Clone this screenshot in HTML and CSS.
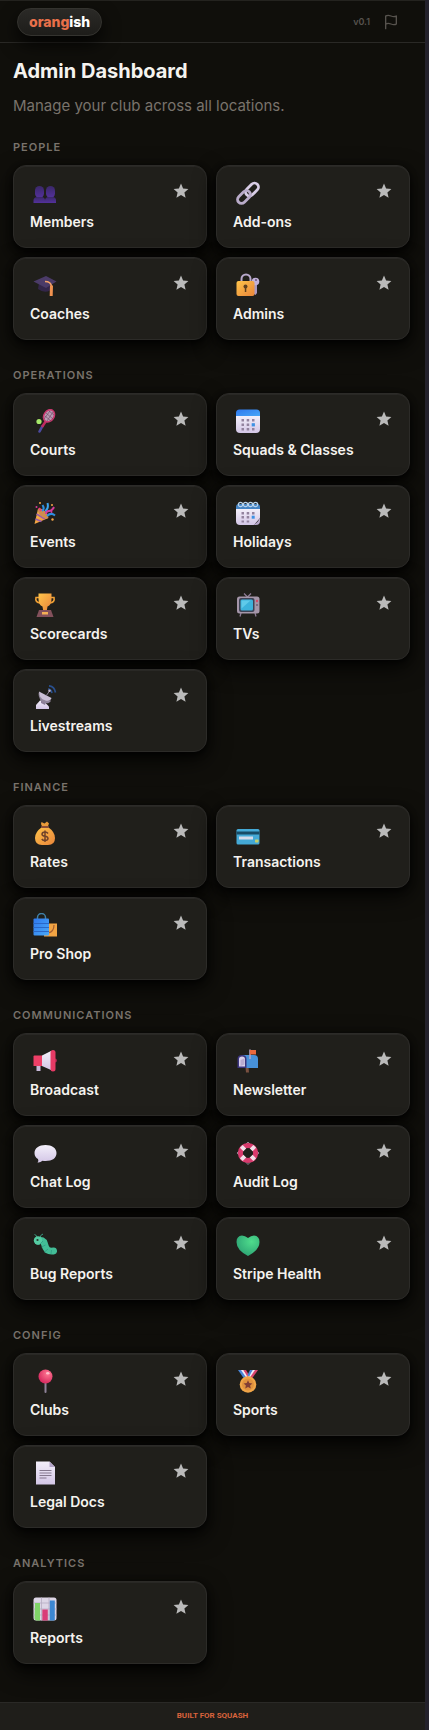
FILE: index.html
```html
<!DOCTYPE html>
<html lang="en">

<head>
  <meta charset="UTF-8" />
  <meta name="viewport" content="width=device-width, initial-scale=1.0" />
  <title>Admin Dashboard</title>
  <link rel="stylesheet" href="styles.css">
</head>

<body>
  <!-- shared shapes and gradients -->
  <svg class="defs" width="0" height="0" aria-hidden="true">
    <defs>
      <symbol id="star" viewBox="0 0 16 16">
        <path d="M8 .6l2.1 4.9 5.3.5-4 3.5 1.2 5.3L8 12l-4.6 2.8 1.2-5.3-4-3.5 5.3-.5z" />
      </symbol>
      <linearGradient id="gold" x1="0" y1="0" x2="1" y2="1">
        <stop offset="0" stop-color="#ffc44a" />
        <stop offset="1" stop-color="#e9853a" />
      </linearGradient>
      <linearGradient id="paper" x1="0" y1="0" x2="0" y2="1">
        <stop offset="0" stop-color="#f3effa" />
        <stop offset="1" stop-color="#d3c6e6" />
      </linearGradient>
      <linearGradient id="blue" x1="0" y1="0" x2="1" y2="1">
        <stop offset="0" stop-color="#2f78ee" />
        <stop offset="1" stop-color="#49a9f8" />
      </linearGradient>
      <linearGradient id="purple" x1="0" y1="0" x2="0" y2="1">
        <stop offset="0" stop-color="#3a2868" />
        <stop offset="1" stop-color="#54319c" />
      </linearGradient>
      <radialGradient id="green" cx=".65" cy=".3" r=".8">
        <stop offset="0" stop-color="#4fdc8c" />
        <stop offset="1" stop-color="#2a9f72" />
      </radialGradient>
      <radialGradient id="pink" cx=".65" cy=".3" r=".7">
        <stop offset="0" stop-color="#ff7892" />
        <stop offset="1" stop-color="#d82b60" />
      </radialGradient>
    </defs>
  </svg>

  <header class="topbar">
    <a href="#" class="logo"><span>orang</span>ish</a>
    <div class="topbar-right">
      <span class="version">v0.1</span>
      <button class="flag-btn" aria-label="Report a problem">
        <svg width="16" height="16" viewBox="0 0 24 24" fill="none" stroke="currentColor" stroke-width="2" stroke-linecap="round" stroke-linejoin="round">
          <path d="M4 15s1-1 4-1 5 2 8 2 4-1 4-1V3s-1 1-4 1-5-2-8-2-4 1-4 1z" />
          <path d="M4 22V15" />
        </svg>
      </button>
    </div>
  </header>

  <main>
    <h1>Admin Dashboard</h1>
    <p class="subtitle">Manage your club across all locations.</p>

    <section>
      <h2>People</h2>
      <div class="grid">
        <div class="card">
          <div class="card-top">
            <svg class="icon" viewBox="0 0 24 24">
              <g fill="url(#purple)">
                <rect x="2" y="5" width="9" height="12" rx="4.5" />
                <rect x="13" y="5" width="9" height="12" rx="4.5" />
                <path d="M.5 22v-2.5q0-3.5 4-3.5h4q3.500 0 3.500 3.500V22z" />
                <path d="M12 22v-2.5q0-3.500 3.500-3.500h4q3.500 0 3.500 3.500V22z" />
              </g>
            </svg>
            <button class="fav" aria-label="Favourite Members"><svg><use href="#star" /></svg></button>
          </div>
          <a href="#">Members</a>
        </div>
        <div class="card">
          <div class="card-top">
            <svg class="icon" viewBox="0 0 24 24">
              <g fill="none" stroke-width="2.8">
                <rect x="8.5" y="4.5" width="15" height="8" rx="4" transform="rotate(-45 16 8.5)" stroke="#d8cde6" />
                <rect x=".5" y="12" width="15" height="8" rx="4" transform="rotate(-45 8 16)" stroke="#b9abc9" />
              </g>
            </svg>
            <button class="fav" aria-label="Favourite Add-ons"><svg><use href="#star" /></svg></button>
          </div>
          <a href="#">Add-ons</a>
        </div>
        <div class="card">
          <div class="card-top">
            <svg class="icon" viewBox="0 0 24 24">
              <path d="M6 10l-1 6q6 4.5 12 1.5l2-7z" fill="#33264a" />
              <path d="M.5 8.500L13 3l10.500 5.500L13 15z" fill="#4b3b68" />
              <path d="M12 8.500q6 0 6.500 5" fill="none" stroke="#f3a269" stroke-width="1.6" />
              <path d="M17 12.500h3l-.3 10.500h-3z" fill="#f09250" />
            </svg>
            <button class="fav" aria-label="Favourite Coaches"><svg><use href="#star" /></svg></button>
          </div>
          <a href="#">Coaches</a>
        </div>
        <div class="card">
          <div class="card-top">
            <svg class="icon" viewBox="0 0 24 24">
              <path d="M5.500 10V6a4.500 4.500 0 0 1 9 0v4" fill="none" stroke="#b8a8cb" stroke-width="2" />
              <path d="M18 12h3v8l-1.500 2-1.500-1z" fill="#aa98c2" />
              <circle cx="19.5" cy="8.5" r="3.8" fill="#c2b1d9" />
              <circle cx="20" cy="7" r=".9" fill="#5b4a72" />
              <rect x=".5" y="8" width="18" height="15" rx="2" fill="url(#gold)" />
              <circle cx="9.5" cy="13.5" r="2" fill="#60401f" />
              <path d="M8.800 14h1.500v5H8.800z" fill="#60401f" />
            </svg>
            <button class="fav" aria-label="Favourite Admins"><svg><use href="#star" /></svg></button>
          </div>
          <a href="#">Admins</a>
        </div>
      </div>
    </section>

    <section>
      <h2>Operations</h2>
      <div class="grid">
        <div class="card">
          <div class="card-top">
            <svg class="icon" viewBox="0 0 24 24">
              <path d="M6.500 22.500l3-5.500" stroke="#4c4aa0" stroke-width="2.6" stroke-linecap="round" />
              <path d="M9 18l4-6" stroke="#c02a61" stroke-width="2.4" />
              <ellipse cx="16" cy="6.8" rx="5" ry="6.5" transform="rotate(33 16 6.8)" fill="#b99bb4" stroke="#c9386e" stroke-width="1.6" />
              <path d="M12 7l6 5M13 4l7 6M16 2l5 4M11 10l6-8M14 12l6-9" stroke="#6c4560" stroke-width=".6" />
              <circle cx="6" cy="12.5" r="2.6" fill="#a6e86a" />
            </svg>
            <button class="fav" aria-label="Favourite Courts"><svg><use href="#star" /></svg></button>
          </div>
          <a href="#">Courts</a>
        </div>
        <div class="card">
          <div class="card-top">
            <svg class="icon" viewBox="0 0 24 24">
              <path d="M3.500.5h17q3.500 0 3.500 3.500v4H0V4Q0 .5 3.500.5z" fill="url(#blue)" />
              <path d="M0 7h24v13q0 4-4 4H4q-4 0-4-4z" fill="url(#paper)" />
              <path d="M5.500 10H8v2.500H5.500zM10.700 10h2.500v2.500h-2.500zM16 10h2.500v2.500H16zM5.500 14.500H8V17H5.500zM10.700 14.500h2.500V17h-2.500zM5.500 19H8v2.500H5.500zM10.700 19h2.500v2.500h-2.500zM16 19h2.500v2.500H16z" fill="#93839f" />
              <path d="M15.700 14.200h3.200v3.200h-3.200z" fill="#3d91e4" />
            </svg>
            <button class="fav" aria-label="Favourite Squads &amp; Classes"><svg><use href="#star" /></svg></button>
          </div>
          <a href="#">Squads &amp; Classes</a>
        </div>
        <div class="card">
          <div class="card-top">
            <svg class="icon" viewBox="0 0 24 24">
              <path d="M1.500 23L5 8q4 1 7 4t3.500 5z" fill="url(#gold)" />
              <path d="M2.500 18l6 2.500M3.500 13l8.500 5" stroke="#9a5ea8" stroke-width="1.8" />
              <ellipse cx="10" cy="12.5" rx="3" ry="6.5" transform="rotate(-47 10 12.5)" fill="#cf8d4e" />
              <path d="M9 10q3-2 .5-6M14 15q4-4 8-.5" stroke="#2f8fe0" stroke-width="2" fill="none" />
              <path d="M12 10q4-2 2.500-8" stroke="#3ba5ee" stroke-width="2" fill="none" />
              <path d="M13 13q0-3 3-3t5-4" stroke="#d33b9c" stroke-width="2" fill="none" />
              <path d="M6 7l2 3" stroke="#ef3f78" stroke-width="2" />
              <g fill="#f3a74a"><circle cx="7" cy="2" r="1" /><circle cx="19" cy="4" r="1" /><circle cx="19.5" cy="18.5" r="1.2" /></g>
              <g fill="#d33b9c"><circle cx="3.5" cy="6" r="1" /><circle cx="18.5" cy="11" r="1" /></g>
            </svg>
            <button class="fav" aria-label="Favourite Events"><svg><use href="#star" /></svg></button>
          </div>
          <a href="#">Events</a>
        </div>
        <div class="card">
          <div class="card-top">
            <svg class="icon" viewBox="0 0 24 24">
              <path d="M3 3h18q3 0 3 3v3H0V6q0-3 3-3z" fill="#4484c4" />
              <path d="M0 8h24v9l-6 7H4q-4 0-4-4z" fill="url(#paper)" />
              <path d="M24 16v4q0 4-4 4h-3q6-3 7-8z" fill="#b9a9cc" />
              <g fill="none" stroke="#b8d3ec" stroke-width="1.2">
                <circle cx="4.5" cy="3.5" r="2.2" /><circle cx="9.5" cy="3.5" r="2.2" /><circle cx="14.5" cy="3.5" r="2.2" /><circle cx="19.5" cy="3.5" r="2.2" />
              </g>
              <path d="M5.500 11H8v2.500H5.500zM10.700 11h2.500v2.500h-2.500zM16 11h2.500v2.500H16zM5.500 15H8v2.500H5.500zM10.700 15h2.500v2.500h-2.500zM5.500 19.500H8v2H5.500zM10.700 19.500h2.500v2h-2.500z" fill="#93839f" />
              <path d="M15.700 14.700h3v3h-3z" fill="#3d91e4" />
            </svg>
            <button class="fav" aria-label="Favourite Holidays"><svg><use href="#star" /></svg></button>
          </div>
          <a href="#">Holidays</a>
        </div>
        <div class="card">
          <div class="card-top">
            <svg class="icon" viewBox="0 0 24 24">
              <path d="M6 4.500H3q-1.200 5 4.500 5.500M18 4.500h3q1.200 5-4.500 5.500" fill="none" stroke="#f0a034" stroke-width="1.6" />
              <path d="M5.500.5h13V6q0 6-4 7.500l-.7 4h-3.600l-.7-4q-4-1.500-4-7.500z" fill="url(#gold)" />
              <path d="M6 17h12l2.500 7h-17z" fill="#83505b" />
              <path d="M9 19h6v2.500H9z" fill="#f4b055" />
            </svg>
            <button class="fav" aria-label="Favourite Scorecards"><svg><use href="#star" /></svg></button>
          </div>
          <a href="#">Scorecards</a>
        </div>
        <div class="card">
          <div class="card-top">
            <svg class="icon" viewBox="0 0 24 24">
              <path d="M8 .5L11.500 4 15 .5M5 20l-1 3.500M19 20l1 3.500" stroke="#8c7a94" stroke-width="1.3" fill="none" />
              <rect x="1" y="3.500" width="22.500" height="17" rx="2.500" fill="#a596a9" />
              <rect x="3" y="5" width="15.500" height="14" rx="2" fill="#3e4254" />
              <rect x="4.500" y="6.500" width="12.500" height="11" rx="1.500" fill="#3cb2db" />
              <path d="M5.500 8.500q0-1 1-1h8l-9 8z" fill="#5fcaea" />
              <circle cx="21" cy="8" r="1.200" fill="#d24b69" />
              <circle cx="21" cy="12" r="1.100" fill="#6e6378" />
            </svg>
            <button class="fav" aria-label="Favourite TVs"><svg><use href="#star" /></svg></button>
          </div>
          <a href="#">TVs</a>
        </div>
        <div class="card">
          <div class="card-top">
            <svg class="icon" viewBox="0 0 24 24">
              <path d="M3 24v-4l4-4.500h3l6 6V24z" fill="url(#paper)" />
              <path d="M8 13l5 4-1 3-4-2z" fill="#8a7d97" />
              <path d="M5.500 7q1 8 12.500 8.500-1 3-5 2.800Q5 16.500 5.500 7z" fill="#8f8499" />
              <path d="M6 6.500L18.500 13q-1 3.500-6 2.500-7-2-6.500-9z" fill="#cbc0d6" />
              <path d="M13 11l3.500-5" stroke="#8f8499" stroke-width="1" />
              <path d="M15 4q3 0 4 4M16 .8q5.500.7 6.500 6.700" fill="none" stroke="#294f8e" stroke-width="1.7" />
              <circle cx="16.5" cy="5.8" r="1.2" fill="#c5bad0" />
            </svg>
            <button class="fav" aria-label="Favourite Livestreams"><svg><use href="#star" /></svg></button>
          </div>
          <a href="#">Livestreams</a>
        </div>
      </div>
    </section>

    <section>
      <h2>Finance</h2>
      <div class="grid">
        <div class="card">
          <div class="card-top">
            <svg class="icon" viewBox="0 0 24 24">
              <path d="M8.500 1l3 1.500L14 .5l2 2-1.500 4h-5L8 3z" fill="#e99a39" />
              <path d="M9 6h6q7 5 7 11 0 7-7 7H9q-7 0-7-7Q2 11 9 6z" fill="url(#gold)" />
              <rect x="8" y="5" width="8" height="2" rx="1" fill="#8c4d36" />
              <path d="M15 12.500q-1-1.500-3-1.500-3 .2-3 2.200 0 1.600 3 2t3 2.300q-.2 2-3 2-2.200 0-3.200-1.500M12 9.500V21" fill="none" stroke="#71432a" stroke-width="1.500" />
            </svg>
            <button class="fav" aria-label="Favourite Rates"><svg><use href="#star" /></svg></button>
          </div>
          <a href="#">Rates</a>
        </div>
        <div class="card">
          <div class="card-top">
            <svg class="icon" viewBox="0 0 24 24">
              <rect x=".5" y="8" width="23" height="15.500" rx="1.500" fill="#44a9d6" />
              <path d="M.5 10.500h23v3H.5z" fill="#174b66" />
              <path d="M3 15.500h14v3H3z" fill="#d5dbea" />
              <rect x="19" y="18.500" width="3.500" height="3" rx=".7" fill="#c5d06b" />
            </svg>
            <button class="fav" aria-label="Favourite Transactions"><svg><use href="#star" /></svg></button>
          </div>
          <a href="#">Transactions</a>
        </div>
        <div class="card">
          <div class="card-top">
            <svg class="icon" viewBox="0 0 24 24">
              <path d="M11 10.500h13v13H11z" fill="#f2a443" />
              <path d="M21 12q0 7-6 8" fill="none" stroke="#a65e30" stroke-width="1.200" />
              <path d="M4.500 7V4.500a3.500 3.500 0 0 1 8 0V7" fill="none" stroke="#3f80a8" stroke-width="1.500" />
              <rect x=".5" y="5.500" width="15.500" height="17" rx="1" fill="url(#blue)" />
              <path d="M.5 10.500H16M.5 14.500H16M.5 18.500H16" stroke="#2a68c8" stroke-width="1" />
            </svg>
            <button class="fav" aria-label="Favourite Pro Shop"><svg><use href="#star" /></svg></button>
          </div>
          <a href="#">Pro Shop</a>
        </div>
      </div>
    </section>

    <section>
      <h2>Communications</h2>
      <div class="grid">
        <div class="card">
          <div class="card-top">
            <svg class="icon" viewBox="0 0 24 24">
              <path d="M3.500 16h4v6h-4z" fill="#c8b9da" />
              <path d="M.5 7.500q0-1 1-1H9v10.500H.5z" fill="#ee3f67" />
              <path d="M9 6.500l9-4.500v19l-9-4z" fill="url(#paper)" />
              <circle cx="22" cy="11.500" r="2" fill="#a3254b" />
              <rect x="17.500" y="1" width="5" height="21.500" rx="2.500" fill="#e63a65" />
            </svg>
            <button class="fav" aria-label="Favourite Broadcast"><svg><use href="#star" /></svg></button>
          </div>
          <a href="#">Broadcast</a>
        </div>
        <div class="card">
          <div class="card-top">
            <svg class="icon" viewBox="0 0 24 24">
              <path d="M9.500 18h3l.5 5.500h-3z" fill="#795040" />
              <path d="M6 6h12q4 0 4 4v9H8z" fill="#4791d9" />
              <path d="M1.500 19v-9q0-4 4.500-4t4.500 4v9z" fill="#3b357e" />
              <path d="M3 17.500V10q0-2.500 3-2.500T9 10v7.500z" fill="#d9d0ea" />
              <path d="M4.500 11l4-1.500v6l-4 1.500z" fill="#b9abd0" />
              <path d="M14 .5V10" stroke="#b7a4c7" stroke-width="1.500" />
              <path d="M14 1h6v4.500h-6z" fill="#e9683d" />
            </svg>
            <button class="fav" aria-label="Favourite Newsletter"><svg><use href="#star" /></svg></button>
          </div>
          <a href="#">Newsletter</a>
        </div>
        <div class="card">
          <div class="card-top">
            <svg class="icon" viewBox="0 0 24 24">
              <path d="M12.500 4C19 4 23.500 7 23.500 12s-4 8-11 8q-1.500 0-3-.2Q7 22 4.500 21.500 6 20 5 18 1.500 16 1.500 12C1.500 7 6 4 12.500 4z" fill="url(#paper)" />
            </svg>
            <button class="fav" aria-label="Favourite Chat Log"><svg><use href="#star" /></svg></button>
          </div>
          <a href="#">Chat Log</a>
        </div>
        <div class="card">
          <div class="card-top">
            <svg class="icon" viewBox="0 0 24 24">
              <path d="M12 1l11 11-11 11.500L1 12z" fill="none" stroke="#8d8292" stroke-width="1" />
              <circle cx="12" cy="12" r="7.600" fill="none" stroke="#d93a6d" stroke-width="5" />
              <path d="M5.300 5.300l3.500 3.500M18.700 5.300l-3.500 3.500M5.300 18.700l3.500-3.500M18.700 18.700l-3.500-3.500" stroke="#f1dfe9" stroke-width="4" />
            </svg>
            <button class="fav" aria-label="Favourite Audit Log"><svg><use href="#star" /></svg></button>
          </div>
          <a href="#">Audit Log</a>
        </div>
        <div class="card">
          <div class="card-top">
            <svg class="icon" viewBox="0 0 24 24">
              <path d="M4 5Q4 2 1.500 1.500M7 5q0-3 3-4" fill="none" stroke="#3a9a80" stroke-width="1" />
              <path d="M5 8q5-2 6.500 3 1 4 3 6 2 1.500 6 1" fill="none" stroke="#43bd97" stroke-width="7" stroke-linecap="round" />
              <circle cx="5" cy="7.500" r="4.200" fill="#55cba2" />
              <path d="M10 8l-3 3M12.500 12l-4 2M15 16l-3.500 3M18.500 17l-.5 4" stroke="#319a83" stroke-width=".8" />
              <circle cx="4.500" cy="7" r="1.100" fill="#263830" />
            </svg>
            <button class="fav" aria-label="Favourite Bug Reports"><svg><use href="#star" /></svg></button>
          </div>
          <a href="#">Bug Reports</a>
        </div>
        <div class="card">
          <div class="card-top">
            <svg class="icon" viewBox="0 0 24 24">
              <path d="M12 5Q15 2.500 18 2.500q5.500.5 5.500 6.500 0 8-11.500 14Q.5 17 .5 9 .5 3 6 2.500 9 2.500 12 5z" fill="url(#green)" />
            </svg>
            <button class="fav" aria-label="Favourite Stripe Health"><svg><use href="#star" /></svg></button>
          </div>
          <a href="#">Stripe Health</a>
        </div>
      </div>
    </section>

    <section>
      <h2>Config</h2>
      <div class="grid">
        <div class="card">
          <div class="card-top">
            <svg class="icon" viewBox="0 0 24 24">
              <path d="M12.500 13v10" stroke="#8e8298" stroke-width="2" stroke-linecap="round" />
              <circle cx="12.500" cy="7.500" r="7" fill="url(#pink)" />
              <ellipse cx="14.800" cy="4.200" rx="1.700" ry="1.200" fill="#ffc0cc" />
            </svg>
            <button class="fav" aria-label="Favourite Clubs"><svg><use href="#star" /></svg></button>
          </div>
          <a href="#">Clubs</a>
        </div>
        <div class="card">
          <div class="card-top">
            <svg class="icon" viewBox="0 0 24 24">
              <path d="M2 1h4l7 7-4 3z" fill="#4a86d8" />
              <path d="M5 1h2.500l5 6-2 2z" fill="#f1ecf7" />
              <path d="M7.500 1H10l3 5-1.500 2z" fill="#d8456e" />
              <path d="M22 1h-4l-7 7 4 3z" fill="#d8456e" />
              <path d="M19 1h-2.500l-5 6 2 2z" fill="#f1ecf7" />
              <path d="M16.500 1H14l-2.500 5 1.500 2z" fill="#4a86d8" />
              <circle cx="12" cy="15.500" r="8.300" fill="#f0a548" />
              <circle cx="12" cy="15.500" r="6" fill="#e0923e" />
              <path d="M12 11.200l1.300 2.900 3.100.3-2.300 2.100.7 3.100-2.800-1.600-2.800 1.600.7-3.100-2.300-2.100 3.100-.3z" fill="#813e35" />
            </svg>
            <button class="fav" aria-label="Favourite Sports"><svg><use href="#star" /></svg></button>
          </div>
          <a href="#">Sports</a>
        </div>
        <div class="card">
          <div class="card-top">
            <svg class="icon" viewBox="0 0 24 24">
              <path d="M3 .5h13.500L22 6v17.500H3z" fill="url(#paper)" />
              <path d="M16.500.5L22 6h-5.500z" fill="#b3a3c8" />
              <path d="M6.500 9.500h12M6.500 12h12M6.500 14.500h12M6.500 17h7" stroke="#85788f" stroke-width="1" />
            </svg>
            <button class="fav" aria-label="Favourite Legal Docs"><svg><use href="#star" /></svg></button>
          </div>
          <a href="#">Legal Docs</a>
        </div>
      </div>
    </section>

    <section>
      <h2>Analytics</h2>
      <div class="grid">
        <div class="card">
          <div class="card-top">
            <svg class="icon" viewBox="0 0 24 24">
              <rect x=".5" y=".5" width="23" height="23" rx="2.500" fill="#ddd6e6" />
              <path d="M.5 6h23M.5 12h23M.5 18h23M8.500.5v23M16 .5v23" stroke="#b6acc2" stroke-width=".8" />
              <path d="M2 6h5v17.500H3L1.500 22z" fill="#80d468" />
              <path d="M9.300 12.500h5.500v11H9.300z" fill="#d93c78" />
              <path d="M16.800 3.500h5V23l-1 .5h-4z" fill="#3c87d2" />
            </svg>
            <button class="fav" aria-label="Favourite Reports"><svg><use href="#star" /></svg></button>
          </div>
          <a href="#">Reports</a>
        </div>
      </div>
    </section>
  </main>

  <footer>Built for squash</footer>
</body>

</html>
```

FILE: styles.css
```css
* {
  box-sizing: border-box;
}

body {
  margin: 0;
  min-height: 100vh;
  display: flex;
  flex-direction: column;
  font-family: Inter, "Liberation Sans", sans-serif;
  background: #100f0b;
  color: #f5f3ef;
  border-right: 4px solid #24222c;
}

.defs {
  position: absolute;
}

.topbar {
  display: flex;
  align-items: center;
  justify-content: space-between;
  height: 43px;
  padding: 0 26px 0 17px;
  border-top: 1px solid #24231f;
  border-bottom: 1px solid #2a2926;
}

.logo {
  height: 28px;
  padding: 0 11px;
  border: 1px solid #34332f;
  border-radius: 14px;
  background: linear-gradient(#2b2a27, #1e1d1a);
  box-shadow: 0 8px 18px rgba(0, 0, 0, 0.8);
  color: #fff;
  font-size: 14px;
  font-weight: 800;
  line-height: 25px;
  text-decoration: none;
}

.logo span {
  color: #e8704a;
}

.topbar-right {
  display: flex;
  align-items: center;
  gap: 13px;
  color: #57534e;
}

.version {
  font-size: 9px;
  font-weight: 600;
}

.flag-btn {
  display: flex;
  padding: 0;
  border: none;
  background: none;
  color: inherit;
  cursor: pointer;
}

main {
  flex: 1;
  padding: 16px 15px 36px 13px;
}

h1 {
  margin: 0 0 11px;
  font-size: 20px;
  font-weight: 700;
  line-height: 24px;
}

.subtitle {
  margin: 0 0 21px;
  color: #79736c;
  font-size: 15px;
  line-height: 24px;
}

section + section {
  margin-top: 27px;
}

h2 {
  margin: 0 0 10px;
  color: #79736c;
  font-size: 11px;
  font-weight: 600;
  line-height: 16px;
  letter-spacing: 1px;
  text-transform: uppercase;
}

.grid {
  display: grid;
  grid-template-columns: 1fr 1fr;
  gap: 9px;
}

.card {
  padding: 15px 16px 16px;
  border: 1px solid #2c2b28;
  border-radius: 13px;
  background: #201f1b;
  box-shadow: 0 8px 22px rgba(0, 0, 0, 0.8), 0 2px 6px rgba(0, 0, 0, 0.7), inset 0 1px 0 #292825;
}

.card-top {
  display: flex;
  align-items: flex-start;
  justify-content: space-between;
  margin-bottom: 8px;
}

.icon {
  width: 24px;
  height: 24px;
  margin-left: 3px;
}

.fav {
  padding: 2px 1px;
  border: none;
  background: none;
  cursor: pointer;
}

.fav svg {
  display: block;
  width: 16px;
  height: 16px;
  fill: #bababa;
}

.card a {
  display: block;
  color: #f5f3ef;
  font-size: 14px;
  font-weight: 600;
  line-height: 18px;
  text-decoration: none;
}

footer {
  padding: 6px 0 7px;
  border-top: 1px solid #2a2926;
  background: #1f1e1a;
  color: #d9633c;
  font-family: Roboto, "Liberation Sans", sans-serif;
  font-size: 8px;
  font-weight: 700;
  line-height: 14px;
  text-align: center;
  text-transform: uppercase;
}
```
